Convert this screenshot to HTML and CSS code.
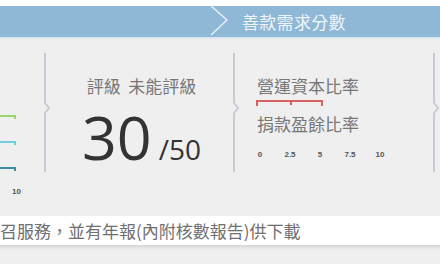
FILE: index.html
```html
<!DOCTYPE html>
<html lang="zh-Hant">
<head>
    <meta charset="UTF-8">
    <meta name="viewport" content="width=device-width, initial-scale=1.0">
    <title>善款需求分數</title>
    <link rel="stylesheet" href="styles.css">
</head>
<body>
    <div class="top-gap"></div>
    <div class="title-bar">
        <svg class="title-arrow" width="20" height="31" viewBox="0 0 20 31">
            <path d="M1 0 L17 14 L1 29" fill="none" stroke="#eef4f9" stroke-width="1.3"/>
        </svg>
        <span class="title-text">善款需求分數</span>
    </div>

    <div class="panel">
        <div class="section chart-left">
            <div class="bar bar-green"></div>
            <div class="bar bar-cyan"></div>
            <div class="bar bar-teal"></div>
            <div class="axis-end">10</div>
        </div>

        <svg class="divider" width="8" height="119" viewBox="0 0 8 119">
            <path d="M2 0 L2 50 L6 55 L2 60 L2 119" fill="none" stroke="#c6ccd3" stroke-width="2"/>
        </svg>

        <div class="section rating">
            <p class="rating-label">評級&nbsp; 未能評級</p>
            <p class="score">30<span class="score-max">/50</span></p>
        </div>

        <svg class="divider" width="8" height="119" viewBox="0 0 8 119">
            <path d="M2 0 L2 50 L6 55 L2 60 L2 119" fill="none" stroke="#c6ccd3" stroke-width="2"/>
        </svg>

        <div class="section ratios">
            <p class="ratio-name">營運資本比率</p>
            <svg class="ratio-bar" width="68" height="7" viewBox="0 0 68 7">
                <path d="M1 6 L1 1 L66 1 L66 6 M35 1 L35 5" fill="none" stroke="#d9605e" stroke-width="2"/>
            </svg>
            <p class="ratio-name">捐款盈餘比率</p>
            <div class="axis">
                <span>0</span>
                <span>2.5</span>
                <span>5</span>
                <span>7.5</span>
                <span>10</span>
            </div>
        </div>

        <svg class="divider" width="8" height="119" viewBox="0 0 8 119">
            <path d="M2 0 L2 50 L6 55 L2 60 L2 119" fill="none" stroke="#c6ccd3" stroke-width="2"/>
        </svg>
    </div>

    <div class="note">召服務，並有年報(內附核數報告)供下載</div>
    <div class="note-shadow"></div>
</body>
</html>
```

FILE: styles.css
```css
body {
    margin: 0;
    width: 440px;
    height: 264px;
    overflow: hidden;
    background: #f0f0f0;
    font-family: "Noto Sans CJK TC", "Open Sans", sans-serif;
}
p {
    margin: 0;
}
.top-gap {
    height: 6px;
    background: #ffffff;
}
.title-bar {
    display: flex;
    align-items: center;
    height: 31px;
    padding-left: 210px;
    background: #8fb8d7;
    border-bottom: 2px solid #dbe7f0;
}
.title-arrow {
    display: block;
    margin-right: 12px;
}
.title-text {
    color: #eef4f9;
    font-size: 17px;
    letter-spacing: 0.3px;
}

.panel {
    display: grid;
    grid-template-columns: 43px 8px 181px 8px 192px 8px;
    align-items: start;
    height: 177px;
    background: #efefef;
}
.divider {
    display: block;
    margin-top: 14px;
}

/* left chart, cut off by the frame */
.chart-left {
    padding-top: 76px;
}
.bar {
    width: 16px;
    height: 4px;
    border-top: 2px solid;
    border-right: 2px solid;
    box-sizing: border-box;
    margin-bottom: 22px;
}
.bar-green { border-color: #9fd46c; }
.bar-cyan { border-color: #6fcfdf; }
.bar-teal { border-color: #3f8e99; }
.axis-end {
    margin-top: -6px;
    padding-left: 12px;
    font-family: "Liberation Sans", sans-serif;
    font-size: 8px;
    font-weight: bold;
    color: #555555;
}

/* rating */
.rating {
    text-align: center;
    padding-top: 38px;
}
.rating-label {
    font-size: 17px;
    line-height: 17px;
    color: #777777;
}
.score {
    margin-top: 1px;
    font-family: "Open Sans", sans-serif;
    font-size: 61px;
    line-height: normal;
    color: #333333;
}
.score-max {
    margin-left: 7px;
    font-size: 28px;
}

/* ratios */
.ratios {
    padding-top: 35px;
    padding-left: 17px;
}
.ratio-name {
    font-size: 17px;
    line-height: 24px;
    color: #777777;
}
.ratio-bar {
    display: block;
    margin: 2px 0 5px -1px;
}
.axis {
    display: flex;
    margin-top: 14px;
    margin-left: -12px;
}
.axis span {
    width: 30px;
    text-align: center;
    font-family: "Liberation Sans", sans-serif;
    font-size: 8px;
    font-weight: bold;
    color: #555555;
}

.note {
    height: 29px;
    line-height: 29px;
    background: #ffffff;
    color: #707070;
    font-size: 17px;
    white-space: nowrap;
}
.note-shadow {
    height: 5px;
    background: linear-gradient(#d6d6d6, #f0f0f0);
}
```
